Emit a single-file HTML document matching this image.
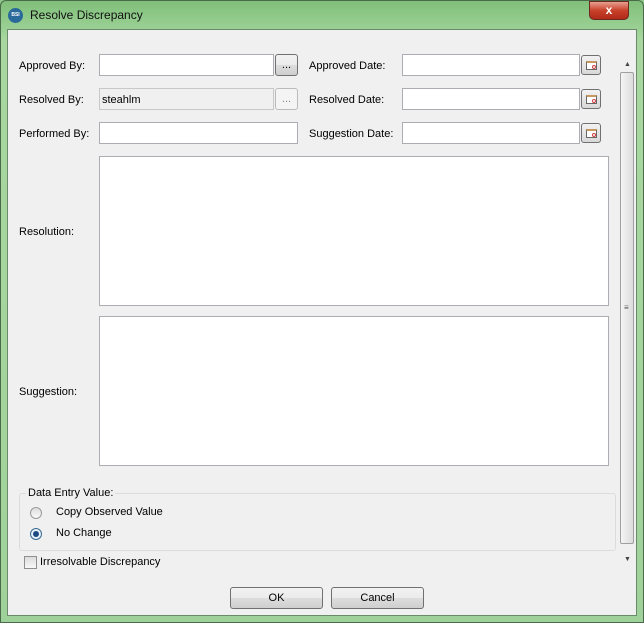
<!DOCTYPE html><html><head><style>
*{box-sizing:border-box}body{margin:0;width:644px;height:623px;overflow:hidden;font-family:"Liberation Sans",sans-serif;font-size:11px;color:#000;background:#8fc98a}
.frame{position:absolute;left:0;top:0;width:644px;height:623px;background:linear-gradient(#7fbf7a,#a8d8a0 40px,#9fd29a);border:1px solid #4a6a4a;border-radius:6px 6px 0 0}
.title{position:absolute;left:30px;top:8px;font-size:12px;color:#111}
.icon{position:absolute;left:8px;top:8px;width:15px;height:15px;border-radius:50%;background:#2a6a9a;color:#fff;font-size:5px;text-align:center;line-height:15px;font-weight:bold}
.close{position:absolute;left:589px;top:1px;width:40px;height:19px;border-radius:0 0 5px 5px;background:linear-gradient(#e8a090,#c8402a 50%,#b02a18);border:1px solid #6a2a20;color:#fff;font-weight:bold;text-align:center;font-size:12px;line-height:17px}
.client{position:absolute;left:7px;top:29px;width:630px;height:587px;background:#f0f0f0;border:1px solid #6a8a6a}
.l{position:absolute}
.in{position:absolute;background:#fff;border:1px solid #abadb3;height:22px;padding:5px 2px 0;}
.btn{position:absolute;border:1px solid #707070;border-radius:3px;background:linear-gradient(#f2f2f2,#ebebeb 50%,#dddddd 51%,#cfcfcf);text-align:center}
.cal{position:absolute;width:20px;height:20px;border:1px solid #707070;border-radius:3px;background:linear-gradient(#f2f2f2,#d8d8d8)}
.cal i{position:absolute;left:4px;top:5px;width:11px;height:9px;border:1px solid #666;background:#fff;border-top:2px solid #c89860}
.cal b{position:absolute;left:10px;top:9px;width:4px;height:4px;border:1px solid #d04040;border-radius:50%}
</style></head><body>
<div class="frame"></div>
<div class="icon">BSI</div><div class="title">Resolve Discrepancy</div>
<div class="close">x</div>
<div class="client"></div>
<div class="l" style="left:19px;top:60px">Approved By:</div>
<div class="in" style="left:99px;top:54px;width:175px"></div>
<div class="btn" style="left:275px;top:54px;width:23px;height:22px;line-height:20px">...</div>
<div class="l" style="left:309px;top:60px">Approved Date:</div>
<div class="in" style="left:402px;top:54px;width:178px"></div>
<div class="cal" style="left:581px;top:55px"><i></i><b></b></div>
<div class="l" style="left:19px;top:94px">Resolved By:</div>
<div class="in" style="left:99px;top:88px;width:175px;background:#f0f0f0;border-color:#c8c8c8">steahlm</div>
<div class="btn" style="left:275px;top:88px;width:23px;height:22px;line-height:20px;color:#888;border-color:#bbb;background:#f4f4f4">...</div>
<div class="l" style="left:309px;top:94px">Resolved Date:</div>
<div class="in" style="left:402px;top:88px;width:178px"></div>
<div class="cal" style="left:581px;top:89px"><i></i><b></b></div>
<div class="l" style="left:19px;top:128px">Performed By:</div>
<div class="in" style="left:99px;top:122px;width:199px"></div>
<div class="l" style="left:309px;top:128px">Suggestion Date:</div>
<div class="in" style="left:402px;top:122px;width:178px"></div>
<div class="cal" style="left:581px;top:123px"><i></i><b></b></div>
<div class="l" style="left:19px;top:226px">Resolution:</div>
<div class="in" style="left:99px;top:156px;width:510px;height:150px"></div>
<div class="l" style="left:19px;top:386px">Suggestion:</div>
<div class="in" style="left:99px;top:316px;width:510px;height:150px"></div>
<div class="l" style="left:19px;top:493px;width:597px;height:58px;border:1px solid #dcdcdc;border-radius:3px"></div>
<div class="l" style="left:26px;top:487px;background:#f0f0f0;padding:0 2px">Data Entry Value:</div>
<div class="l" style="left:30px;top:507px;width:12px;height:12px;border:1px solid #999;border-radius:50%;background:linear-gradient(#ddd,#fafafa)"></div>
<div class="l" style="left:56px;top:506px">Copy Observed Value</div>
<div class="l" style="left:30px;top:528px;width:12px;height:12px;border:1px solid #3a6a90;border-radius:50%;background:#e8f0f8"><div style="position:absolute;left:2px;top:2px;width:6px;height:6px;border-radius:50%;background:#1a4a80"></div></div>
<div class="l" style="left:56px;top:527px">No Change</div>
<div class="l" style="left:24px;top:556px;width:13px;height:13px;border:1px solid #8f8f8f;background:linear-gradient(#ddd,#f8f8f8)"></div>
<div class="l" style="left:40px;top:556px">Irresolvable Discrepancy</div>
<div class="l" style="left:620px;top:56px;width:15px;height:514px;background:#f0f0f0"></div>
<div class="l" style="left:624px;top:61px;font-size:7px;color:#444">▲</div>
<div class="l" style="left:620px;top:72px;width:14px;height:472px;border:1px solid #a0a0a0;border-radius:2px;background:linear-gradient(90deg,#f4f4f4,#dcdcdc)"></div>
<div class="l" style="left:624px;top:303px;font-size:8px;color:#555">≡</div>
<div class="l" style="left:624px;top:556px;font-size:7px;color:#444">▼</div>
<div class="btn" style="left:230px;top:587px;width:93px;height:22px;line-height:20px">OK</div>
<div class="btn" style="left:331px;top:587px;width:93px;height:22px;line-height:20px">Cancel</div>
</body></html>
